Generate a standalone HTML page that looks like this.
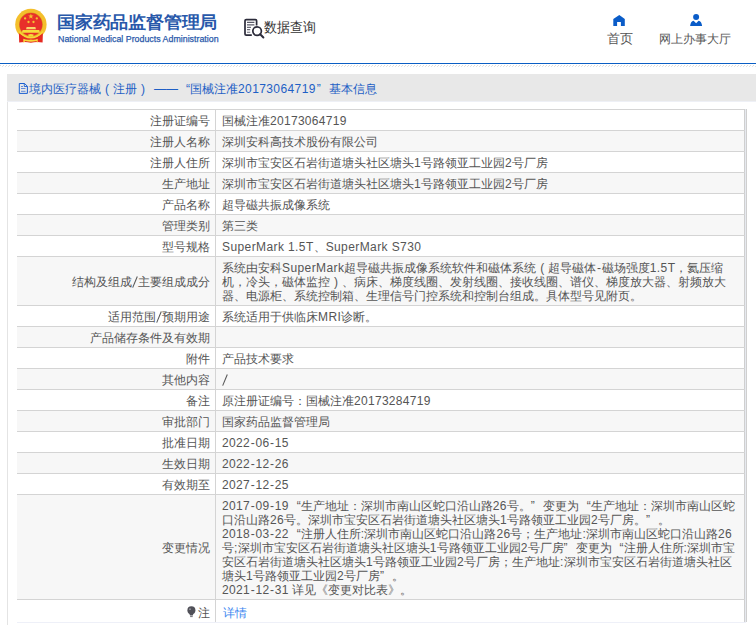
<!DOCTYPE html>
<html><head><meta charset="utf-8">
<style>
*{margin:0;padding:0;box-sizing:border-box}
html,body{width:756px;height:625px;overflow:hidden;background:#fff;font-family:"Liberation Sans",sans-serif;color:#555}
b{font-weight:normal}
.hdr{position:absolute;left:0;top:0;width:756px;height:63px;background:#fff}
.emb{position:absolute;left:13px;top:7px;width:36px;height:38px}
.t1{position:absolute;left:57px;top:11px;font-size:18px;font-weight:bold;color:#2858aa;white-space:nowrap;line-height:24px;letter-spacing:-0.2px;transform-origin:0 0;transform:scaleY(0.94)}
.t2{position:absolute;left:57.5px;top:33.3px;font-size:9.5px;color:#2858aa;white-space:nowrap;line-height:12px;transform-origin:0 0;transform:scaleX(0.93);-webkit-text-stroke:0.25px #2858aa}
.sq{position:absolute;left:243px;top:18px;width:22px;height:21px}
.sqt{position:absolute;left:264px;top:18px;font-size:13px;color:#333;white-space:nowrap;line-height:18px;transform-origin:0 0;transform:scaleY(1.08)}
.nav1{position:absolute;left:607px;top:31px;font-size:12.5px;color:#555;white-space:nowrap;line-height:16px}
.nav2{position:absolute;left:659px;top:31px;font-size:12.2px;color:#555;white-space:nowrap;line-height:16px}
.ic{position:absolute}
.bl{position:absolute;left:0;top:63px;width:756px;height:1px;background:#0a5ec4}
.hatch{position:absolute;left:0;top:65px;width:756px;height:2px}
.box{position:absolute;left:7px;top:74px;width:749px;height:551px;border-left:1px solid #e4e4e4}
.ttl{position:absolute;left:7px;top:74px;width:749px;height:28px;background:#e8e8e8;border-bottom:1px solid #eef0f6}
.ttlt{position:absolute;left:29px;top:80.7px;font-size:12px;color:#1e5fc5;white-space:nowrap;line-height:16px}
.doc{position:absolute;left:18px;top:82px;width:11px;height:13px}
.pp{display:inline-block;width:12px;text-align:center}
.dd{display:inline-block;width:29px;text-align:right;letter-spacing:0}
table{position:absolute;left:17px;top:109px;width:728px;border-collapse:collapse;font-size:12px;line-height:14px}
td{border-top:1px solid #d4d4d4;border-bottom:1px solid #d4d4d4;padding:4px 5px 2px 6.5px;white-space:nowrap;vertical-align:middle}
td.l{width:198px;text-align:right;padding-right:5px;border-right:1px solid #d4d4d4;color:#555}
td.v{color:#555;border-right:1px solid #cfcfcf}
tr:nth-child(even) td{background:#f7f7f7}
.a{letter-spacing:0.3px}
.w{letter-spacing:0.4px}
.ttlt .a{letter-spacing:0.4px;margin-right:1px}
tr.last td{padding-top:5.5px;padding-bottom:2.5px}
.h{display:inline-block;width:5.5px;text-align:center;letter-spacing:0}
.oq{display:inline-block;width:12px;text-align:right;letter-spacing:0}
.cq{display:inline-block;width:12px;text-align:left;letter-spacing:0}
.sl{vertical-align:-2px}
.lk{color:#3a86f0;position:relative;top:0.5px;left:0.5px}
.bulb{vertical-align:-1px;margin-right:2px}
.rb{position:absolute;left:745px;top:109px;width:1px;height:513px;background:#e6e9ef}
.rb2{position:absolute;left:746px;top:109px;width:1px;height:513px;background:#cfcfcf}
.bt{position:absolute;left:17px;top:622px;width:729px;height:1px;background:#eef0f8}
</style></head><body>
<div class="hdr">
 <svg class="emb" viewBox="13 7 36 38">
  <circle cx="30.9" cy="24.5" r="15.7" fill="#f4bf2c"/>
  <circle cx="30.9" cy="24.5" r="11.9" fill="#d9961c"/>
  <circle cx="30.9" cy="24.5" r="11.4" fill="#e8302a"/>
  <path d="M30.9 13.6 L31.6 15.5 L33.6 15.5 L32 16.8 L32.6 18.7 L30.9 17.6 L29.2 18.7 L29.8 16.8 L28.2 15.5 L30.2 15.5Z" fill="#f2c230"/>
  <circle cx="25.1" cy="18.4" r="1.15" fill="#f2c230"/>
  <circle cx="36.8" cy="18.4" r="1.15" fill="#f2c230"/>
  <circle cx="28.5" cy="22" r="1.15" fill="#f2c230"/>
  <circle cx="33.5" cy="22" r="1.15" fill="#f2c230"/>
  <path d="M26.6 27 L35.4 27 L35.9 29.3 L26.1 29.3Z" fill="#f8d66a"/>
  <path d="M22.6 30.1 L39.2 30.1 L40 32.7 L21.8 32.7Z" fill="#f6dc3c"/>
  <path d="M18.9 33.3 Q24 37.5 30.9 37.5 Q37.8 37.5 42.9 33.3 L42.6 42.5 Q37 41.2 30.9 42.7 Q24.8 41.2 19.2 42.5Z" fill="#e52a22"/>
  <path d="M19.2 30.7 Q24 37 30.9 37 Q37.8 37 43 30.7 L43 32.2 Q37.8 38.6 30.9 38.6 Q24 38.6 19.2 32.2Z" fill="#f6d83a"/>
  <path d="M28.2 34.6 Q30.9 33.2 33.6 34.6 L33.2 36.6 L28.6 36.6Z" fill="#f6d83a"/>
  <path d="M23.3 38.8 Q27 40.2 30.9 39.4 Q34.8 40.2 37.7 38.8 L37.7 42.4 L36.8 42.4 L36.6 40.9 Q33.8 41.2 30.9 41.8 Q28 41.2 25.2 40.9 L24.2 42.4 L23.3 42.4Z" fill="#f6d83a"/>
 </svg>
 <div class="t1">国家药品监督管理局</div>
 <div class="t2">National Medical Products Administration</div>
 <svg class="ic" style="left:243px;top:18px" width="22" height="21" viewBox="243 18 22 21">
  <path d="M251.8 35.1 L246.2 35.1 Q245 35.1 245 33.9 L245 20.8 Q245 19.6 246.2 19.6 L255.4 19.6 Q256.6 19.6 256.6 20.8 L256.6 25.4" fill="none" stroke="#2b2b3a" stroke-width="1.7"/>
  <path d="M247 22.4H254.4 M247 24.8H254.4" stroke="#5a5a68" stroke-width="1.2"/>
  <path d="M247 27.4H251 M247 29.6H250.2 M247 32.3H250.2" stroke="#6b6b78" stroke-width="1.1"/>
  <circle cx="257.1" cy="31.1" r="4.3" fill="none" stroke="#2b2b3a" stroke-width="1.7"/>
  <path d="M260.2 34.3 L263.4 37.5" stroke="#2b2b3a" stroke-width="2" stroke-linecap="round"/>
 </svg>
 <div class="sqt">数据查询</div>
 <svg class="ic" style="left:613px;top:14px" width="13" height="12" viewBox="613 14 13 12"><path d="M619.3 14.9 L624.8 19.1 L624.8 25.9 L620.9 25.9 L620.9 21.9 L617.1 21.9 L617.1 25.9 L613.3 25.9 L613.3 19.1Z" fill="#0a5cc8"/></svg>
 <svg class="ic" style="left:689px;top:13px" width="14" height="14" viewBox="689 13 14 14"><circle cx="696.1" cy="16.9" r="3" fill="#0a5cc8"/><path d="M690.1 26 Q690.6 21.2 693.6 20.7 L696.1 23.2 L698.6 20.7 Q701.6 21.2 702.1 26Z" fill="#0a5cc8"/></svg>
 <div class="nav1">首页</div>
 <div class="nav2">网上办事大厅</div>
</div>
<div class="bl"></div>
<svg class="hatch" width="756" height="2" shape-rendering="crispEdges"><defs><pattern id="hp" width="3" height="2" patternUnits="userSpaceOnUse"><rect x="0" y="0" width="1" height="1" fill="#dcdcdc"/><rect x="2" y="1" width="1" height="1" fill="#e2e2e2"/></pattern></defs><rect width="756" height="2" fill="url(#hp)"/></svg>
<div class="box"></div>
<div class="ttl"></div>
<svg class="doc" viewBox="18 82 11 13"><path d="M19.3 83.5 L24.6 83.5 L27.4 86.3 L27.4 93.4 L19.3 93.4Z" fill="none" stroke="#1a5fd0" stroke-width="1"/><path d="M24.3 83.5 L24.3 86.5 L27.4 86.5" fill="none" stroke="#1a5fd0" stroke-width="0.9"/><path d="M21 86.5H23 M21 88.5H25.5 M21 91.3H25.5" stroke="#5580d8" stroke-width="0.9"/></svg>
<div class="ttlt">境内医疗器械<b class="pp">(</b>注册<b class="pp">)</b><b class="dd">——</b><b class="oq">“</b>国械注准<span class="a">20173064719</span><b class="cq">”</b>基本信息</div>
<table>
<tr><td class="l">注册证编号</td><td class="v">国械注准<span class="a">20173064719</span></td></tr>
<tr><td class="l">注册人名称</td><td class="v">深圳安科高技术股份有限公司</td></tr>
<tr><td class="l">注册人住所</td><td class="v">深圳市宝安区石岩街道塘头社区塘头<span class="a">1</span>号路领亚工业园<span class="a">2</span>号厂房</td></tr>
<tr><td class="l">生产地址</td><td class="v">深圳市宝安区石岩街道塘头社区塘头<span class="a">1</span>号路领亚工业园<span class="a">2</span>号厂房</td></tr>
<tr><td class="l">产品名称</td><td class="v">超导磁共振成像系统</td></tr>
<tr><td class="l">管理类别</td><td class="v">第三类</td></tr>
<tr><td class="l">型号规格</td><td class="v"><span class="a w">SuperMark 1.5T</span>、<span class="a w">SuperMark S730</span></td></tr>
<tr><td class="l">结构及组成<span class="a"><svg class="sl" width="6" height="12" viewBox="0 0 6 12"><path d="M0.7 11.6 L5.3 0.5" stroke="#555" stroke-width="1.05"/></svg></span>主要组成成分</td><td class="v">系统由安科<span class="a w">SuperMark</span>超导磁共振成像系统软件和磁体系统<b class="pp">(</b>超导磁体<span class="a"><b class="h">-</b></span>磁场强度<span class="a w">1.5T</span>，氦压缩<br>机，冷头，磁体监控<b class="pp">)</b>、病床、梯度线圈、发射线圈、接收线圈、谱仪、梯度放大器、射频放大<br>器、电源柜、系统控制箱、生理信号门控系统和控制台组成。具体型号见附页。</td></tr>
<tr><td class="l">适用范围<span class="a"><svg class="sl" width="6" height="12" viewBox="0 0 6 12"><path d="M0.7 11.6 L5.3 0.5" stroke="#555" stroke-width="1.05"/></svg></span>预期用途</td><td class="v">系统适用于供临床<span class="a w">MRI</span>诊断。</td></tr>
<tr><td class="l">产品储存条件及有效期</td><td class="v"></td></tr>
<tr><td class="l">附件</td><td class="v">产品技术要求</td></tr>
<tr><td class="l">其他内容</td><td class="v"><span class="a"><svg class="sl" width="6" height="12" viewBox="0 0 6 12"><path d="M0.7 11.6 L5.3 0.5" stroke="#555" stroke-width="1.05"/></svg></span></td></tr>
<tr><td class="l">备注</td><td class="v">原注册证编号：国械注准<span class="a">20173284719</span></td></tr>
<tr><td class="l">审批部门</td><td class="v">国家药品监督管理局</td></tr>
<tr><td class="l">批准日期</td><td class="v"><span class="a">2022<b class="h">-</b>06<b class="h">-</b>15</span></td></tr>
<tr><td class="l">生效日期</td><td class="v"><span class="a">2022<b class="h">-</b>12<b class="h">-</b>26</span></td></tr>
<tr><td class="l">有效期至</td><td class="v"><span class="a">2027<b class="h">-</b>12<b class="h">-</b>25</span></td></tr>
<tr><td class="l">变更情况</td><td class="v"><span class="a">2017<b class="h">-</b>09<b class="h">-</b>19</span><b class="oq">“</b>生产地址：深圳市南山区蛇口沿山路<span class="a">26</span>号。<b class="cq">”</b>变更为<b class="oq">“</b>生产地址：深圳市南山区蛇<br>口沿山路<span class="a">26</span>号。深圳市宝安区石岩街道塘头社区塘头<span class="a">1</span>号路领亚工业园<span class="a">2</span>号厂房。<b class="cq">”</b>。<br><span class="a">2018<b class="h">-</b>03<b class="h">-</b>22</span><b class="oq">“</b>注册人住所<span class="a">:</span>深圳市南山区蛇口沿山路<span class="a">26</span>号；生产地址<span class="a">:</span>深圳市南山区蛇口沿山路<span class="a">26</span><br>号<span class="a">;</span>深圳市宝安区石岩街道塘头社区塘头<span class="a">1</span>号路领亚工业园<span class="a">2</span>号厂房<b class="cq">”</b>变更为<b class="oq">“</b>注册人住所<span class="a">:</span>深圳市宝<br>安区石岩街道塘头社区塘头<span class="a">1</span>号路领亚工业园<span class="a">2</span>号厂房；生产地址<span class="a">:</span>深圳市宝安区石岩街道塘头社区<br>塘头<span class="a">1</span>号路领亚工业园<span class="a">2</span>号厂房<b class="cq">”</b>。<br><span class="a">2021<b class="h">-</b>12<b class="h">-</b>31 </span>详见《变更对比表》。</td></tr>
<tr class="last"><td class="l"><svg class="bulb" width="9" height="12" viewBox="0 0 9 12"><circle cx="4.4" cy="4.3" r="4" fill="#505058"/><path d="M2.2 7.2 L6.6 7.2 L5.8 9.6 L3 9.6Z" fill="#505058"/><path d="M3.1 10.1H5.7V11.1H3.1Z" fill="#707078"/><circle cx="3" cy="3.2" r="0.9" fill="#9a9aa2"/></svg>注</td><td class="v"><span class="lk">详情</span></td></tr>
</table>
<div class="rb"></div>
<div class="rb2"></div>
<div class="bt"></div>
</body></html>
